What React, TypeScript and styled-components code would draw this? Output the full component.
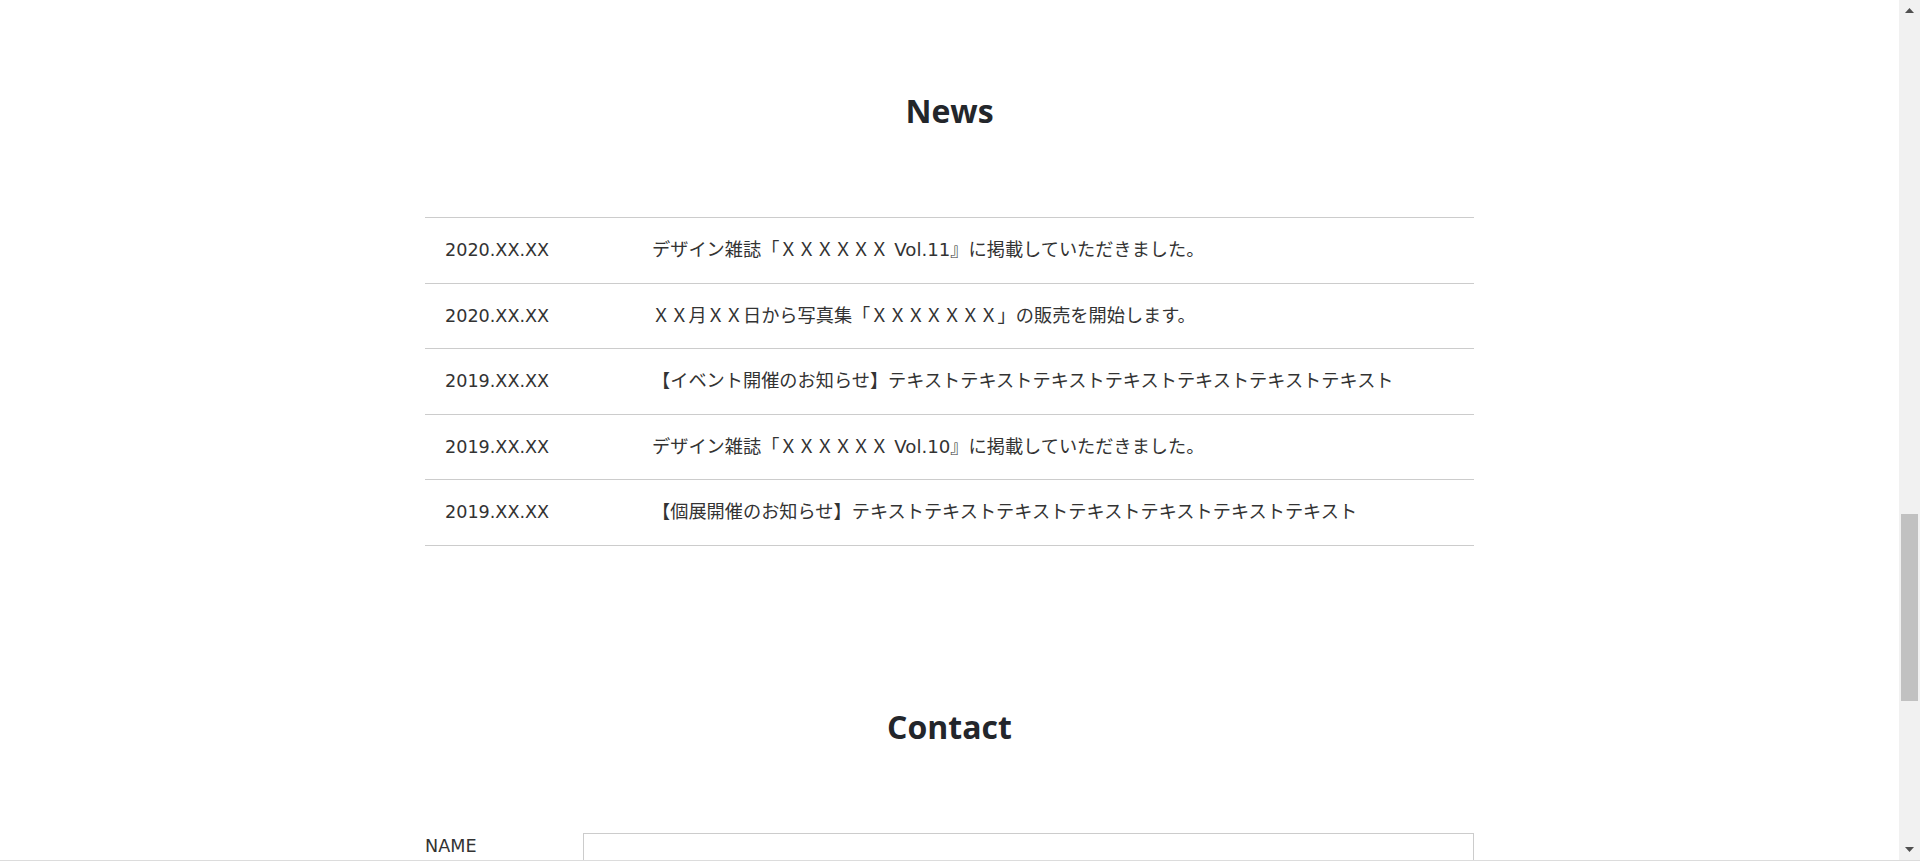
import React from "react";
import styled, { createGlobalStyle } from "styled-components";

const GlobalStyle = createGlobalStyle`
  *, *::before, *::after { box-sizing: border-box; }
  html, body {
    margin: 0;
    padding: 0;
    height: 100%;
    overflow: hidden;
    background: #fff;
  }
  body {
    font-family: "DejaVu Sans", "Noto Sans CJK JP", sans-serif;
    color: #333;
  }
`;

const Frame = styled.div`
  display: flex;
  height: 861px;
  border-bottom: 1px solid #dcdcdc;
  overflow: hidden;
`;

const Page = styled.main`
  flex: 1;
  min-width: 0;
  overflow: hidden;
`;

const Section = styled.section<{ $top: number; $bottom: number }>`
  padding: ${(p) => p.$top}px 0 ${(p) => p.$bottom}px;
`;

const Inner = styled.div`
  width: 1049px;
  margin: 0 auto;
`;

const Heading = styled.h2`
  margin: 0 0 86px;
  font-family: "Open Sans", "Liberation Sans", sans-serif;
  font-weight: 700;
  font-size: 32px;
  line-height: 40px;
  text-align: center;
  color: #23262b;
`;

const NewsList = styled.ul`
  list-style: none;
  margin: 0;
  padding: 0;
  border-top: 1px solid #ccc;
`;

const NewsRow = styled.li`
  display: grid;
  grid-template-columns: 227px 1fr;
  align-items: center;
  height: 65.6px;
  border-bottom: 1px solid #ccc;
  font-size: 17.6px;
  line-height: 26.4px;
`;

const NewsDate = styled.time`
  padding-left: 20px;
  white-space: nowrap;
`;

const NewsText = styled.p`
  margin: 0;
  font-size: 18.2px;
  white-space: nowrap;
`;

const FormRow = styled.div`
  display: grid;
  grid-template-columns: 158px 1fr;
  align-items: start;
`;

const Label = styled.label`
  font-size: 17.6px;
  line-height: 26.4px;
  color: #333;
`;

const TextInput = styled.input`
  display: block;
  width: 100%;
  height: 46px;
  margin: 0;
  padding: 0 12px;
  border: 1px solid #ccc;
  border-radius: 0;
  background: #fff;
  font: inherit;
  font-size: 17.6px;
  outline: none;
`;

const Scrollbar = styled.div`
  flex: none;
  width: 21px;
  background: #f1f1f1;
  display: flex;
  flex-direction: column;
`;

const ScrollButton = styled.div`
  flex: none;
  width: 21px;
  height: 21px;
  display: flex;
  align-items: center;
  justify-content: center;
`;

const Track = styled.div`
  flex: 1;
  display: flex;
  flex-direction: column;
  align-items: center;
`;

const Thumb = styled.div<{ $offset: number; $size: number }>`
  width: 17px;
  margin-top: ${(p) => p.$offset}px;
  height: ${(p) => p.$size}px;
  background: #c1c1c1;
`;

const Arrow = ({ up }: { up: boolean }) => (
  <svg width="9" height="5" viewBox="0 0 9 5" aria-hidden="true">
    <polygon points={up ? "4.5,0 9,5 0,5" : "0,0 9,0 4.5,5"} fill="#505050" />
  </svg>
);

const news = [
  {
    date: "2020.XX.XX",
    text: "デザイン雑誌「ＸＸＸＸＸＸ Vol.11』に掲載していただきました。",
  },
  {
    date: "2020.XX.XX",
    text: "ＸＸ月ＸＸ日から写真集「ＸＸＸＸＸＸＸ」の販売を開始します。",
  },
  {
    date: "2019.XX.XX",
    text: "【イベント開催のお知らせ】テキストテキストテキストテキストテキストテキストテキスト",
  },
  {
    date: "2019.XX.XX",
    text: "デザイン雑誌「ＸＸＸＸＸＸ Vol.10』に掲載していただきました。",
  },
  {
    date: "2019.XX.XX",
    text: "【個展開催のお知らせ】テキストテキストテキストテキストテキストテキストテキスト",
  },
];

export default function App() {
  return (
    <>
      <GlobalStyle />
      <Frame>
        <Page>
          <Section $top={91} $bottom={71}>
            <Inner>
              <Heading>News</Heading>
              <NewsList>
                {news.map((n, i) => (
                  <NewsRow key={i}>
                    <NewsDate>{n.date}</NewsDate>
                    <NewsText>{n.text}</NewsText>
                  </NewsRow>
                ))}
              </NewsList>
            </Inner>
          </Section>
          <Section $top={90} $bottom={60}>
            <Inner>
              <Heading>Contact</Heading>
              <FormRow>
                <Label htmlFor="name">NAME</Label>
                <TextInput id="name" type="text" />
              </FormRow>
            </Inner>
          </Section>
        </Page>
        <Scrollbar>
          <ScrollButton>
            <Arrow up />
          </ScrollButton>
          <Track>
            <Thumb $offset={493} $size={187} />
          </Track>
          <ScrollButton>
            <Arrow up={false} />
          </ScrollButton>
        </Scrollbar>
      </Frame>
    </>
  );
}
